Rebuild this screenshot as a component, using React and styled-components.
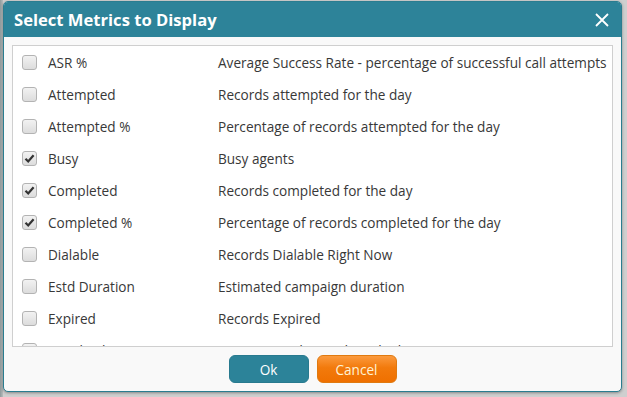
import React from 'react';
import styled, { createGlobalStyle } from 'styled-components';

const GlobalStyle = createGlobalStyle`
  html, body {
    margin: 0;
    padding: 0;
    background: #c9c9c9;
    font-family: 'Open Sans', 'Liberation Sans', sans-serif;
  }
`;

const Page = styled.div`
  width: 627px;
  height: 397px;
  padding: 1px 0 0 3px;
  box-sizing: border-box;
  background: linear-gradient(90deg, #8e9a9c 0, #b8bcbc 3px, #cfcfcf 3px);
`;

const Dialog = styled.div`
  width: 619px;
  height: 391px;
  box-sizing: border-box;
  border: 1px solid #2a7d90;
  border-radius: 5px;
  background: #f9f9f9;
  overflow: hidden;
  display: flex;
  flex-direction: column;
  box-shadow: 0 1px 3px rgba(0, 0, 0, 0.35);
`;

const Header = styled.div`
  height: 35px;
  flex: none;
  background: #2d8399;
  display: flex;
  align-items: center;
  justify-content: space-between;
  padding: 0 11px 0 10px;
`;

const Title = styled.h1`
  margin: 0;
  color: #fff;
  font-size: 16.6px;
  font-weight: 700;
`;

const CloseButton = styled.button`
  border: none;
  background: none;
  padding: 0;
  width: 16px;
  height: 16px;
  display: flex;
  cursor: pointer;
`;

const Body = styled.div`
  flex: 1;
  padding: 8px 8px 0 8px;
  display: flex;
  flex-direction: column;
`;

const ListPanel = styled.div`
  height: 302px;
  box-sizing: border-box;
  border: 1px solid #cfcfcf;
  background: #fff;
  overflow: hidden;
`;

const Row = styled.label`
  height: 32px;
  display: flex;
  align-items: center;
  padding-left: 9px;
  font-size: 13.6px;
  color: #383838;
  white-space: nowrap;
`;

const Box = styled.span`
  width: 13px;
  height: 13px;
  border: 1px solid #b3b3b3;
  border-radius: 3px;
  background: linear-gradient(#f2f2f2, #dcdcdc);
  display: flex;
  align-items: center;
  justify-content: center;
  flex: none;
`;

const Name = styled.span`
  width: 170px;
  margin-left: 11px;
  flex: none;
`;

const Desc = styled.span``;

const Footer = styled.div`
  display: flex;
  justify-content: center;
  gap: 8px;
  padding: 8px 0 0 0;
`;

const Button = styled.button`
  width: 80px;
  height: 28px;
  border-radius: 6px;
  font-family: 'Open Sans', 'Liberation Sans', sans-serif;
  font-size: 13.6px;
  cursor: pointer;
  border: 1px solid ${(p) => (p.$variant === 'cancel' ? '#e07a10' : '#287a8f')};
  background: ${(p) =>
    p.$variant === 'cancel'
      ? 'linear-gradient(#fb9a3e, #f27a0c 45%, #ef7000)'
      : '#2c8399'};
  color: ${(p) => (p.$variant === 'cancel' ? '#fff3d6' : '#fff')};
`;

const metrics = [
  { name: 'ASR %', desc: 'Average Success Rate - percentage of successful call attempts' },
  { name: 'Attempted', desc: 'Records attempted for the day' },
  { name: 'Attempted %', desc: 'Percentage of records attempted for the day' },
  { name: 'Busy', desc: 'Busy agents', checked: true },
  { name: 'Completed', desc: 'Records completed for the day', checked: true },
  { name: 'Completed %', desc: 'Percentage of records completed for the day', checked: true },
  { name: 'Dialable', desc: 'Records Dialable Right Now' },
  { name: 'Estd Duration', desc: 'Estimated campaign duration' },
  { name: 'Expired', desc: 'Records Expired' },
  { name: 'Initial Value', desc: 'Unattempted records in the list' },
];

const Check = () => (
  <svg width="11" height="11" viewBox="0 0 11 11">
    <path d="M1.5 5.8 L4.2 8.5 L9.6 2.2" fill="none" stroke="#333" strokeWidth="2.2" />
  </svg>
);

export default function App() {
  return (
    <>
      <GlobalStyle />
      <Page>
        <Dialog>
          <Header>
            <Title>Select Metrics to Display</Title>
            <CloseButton aria-label="Close">
              <svg width="16" height="16" viewBox="0 0 16 16">
                <path d="M2 2 L14 14 M14 2 L2 14" stroke="#fff" strokeWidth="1.8" />
              </svg>
            </CloseButton>
          </Header>
          <Body>
            <ListPanel>
              {metrics.map((m) => (
                <Row key={m.name}>
                  <Box>{m.checked && <Check />}</Box>
                  <Name>{m.name}</Name>
                  <Desc>{m.desc}</Desc>
                </Row>
              ))}
            </ListPanel>
            <Footer>
              <Button>Ok</Button>
              <Button $variant="cancel">Cancel</Button>
            </Footer>
          </Body>
        </Dialog>
      </Page>
    </>
  );
}
